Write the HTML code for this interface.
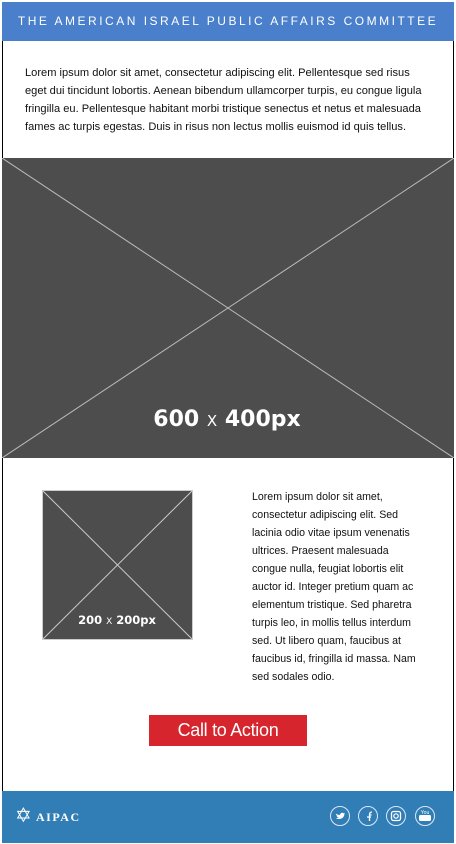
<!DOCTYPE html>
<html><head><style>
*{margin:0;padding:0;box-sizing:border-box}
body{width:456px;height:844px;background:#fff;font-family:"Liberation Sans",Arial,sans-serif;position:relative;overflow:hidden}
.abs{position:absolute}
</style></head><body>
<div class="abs" style="left:2px;top:2px;width:452px;height:840px;border-left:1px solid #000;border-right:1px solid #000"></div>
<div class="abs" style="left:2px;top:2px;width:452px;height:39px;background:#4a7fcb;color:#fff;font-size:12px;letter-spacing:2.5px;text-align:center;line-height:39px;white-space:nowrap">THE AMERICAN ISRAEL PUBLIC AFFAIRS COMMITTEE</div>
<div class="abs" style="left:25px;top:64px;width:408px;font-size:11.1px;line-height:18px;color:#111">Lorem ipsum dolor sit amet, consectetur adipiscing elit. Pellentesque sed risus eget dui tincidunt lobortis. Aenean bibendum ullamcorper turpis, eu congue ligula fringilla eu. Pellentesque habitant morbi tristique senectus et netus et malesuada fames ac turpis egestas. Duis in risus non lectus mollis euismod id quis tellus.</div>
<svg class="abs" style="left:2px;top:158px" width="452" height="300"><rect width="452" height="300" fill="#4d4d4d"/><line x1="0" y1="0" x2="452" y2="300" stroke="#bbb" stroke-width="1"/><line x1="452" y1="0" x2="0" y2="300" stroke="#bbb" stroke-width="1"/><text x="225" y="268" fill="#fff" font-family="DejaVu Sans,sans-serif" font-weight="bold" font-size="22" text-anchor="middle">600 <tspan font-weight="normal" font-size="15">X</tspan> 400px</text></svg>
<svg class="abs" style="left:42px;top:490px" width="151" height="150"><rect x=".5" y=".5" width="150" height="149" fill="#4d4d4d" stroke="#ccc"/><line x1="0" y1="0" x2="151" y2="150" stroke="#ccc"/><line x1="151" y1="0" x2="0" y2="150" stroke="#ccc"/><text x="75" y="134" fill="#fff" font-family="DejaVu Sans,sans-serif" font-weight="bold" font-size="11.5" text-anchor="middle">200 <tspan font-weight="normal" font-size="9">X</tspan> 200px</text></svg>
<div class="abs" style="left:252px;top:488px;width:166px;font-size:10.6px;line-height:18px;color:#111">Lorem ipsum dolor sit amet, consectetur adipiscing elit. Sed lacinia odio vitae ipsum venenatis ultrices. Praesent malesuada congue nulla, feugiat lobortis elit auctor id. Integer pretium quam ac elementum tristique. Sed pharetra turpis leo, in mollis tellus interdum sed. Ut libero quam, faucibus at faucibus id, fringilla id massa. Nam sed sodales odio.</div>
<div class="abs" style="left:149px;top:715px;width:158px;height:31px;background:#d6252c;color:#fff;font-size:18px;text-align:center;line-height:31px;letter-spacing:-0.3px">Call to Action</div>
<div class="abs" style="left:2px;top:791px;width:452px;height:52px;background:#317db5"></div>
<div class="abs" style="left:15px;top:805px;color:#fff;font-size:20px;line-height:22px">✡</div>
<div class="abs" style="left:36px;top:810px;color:#fff;font-family:'Liberation Serif',serif;font-size:12px;letter-spacing:1.5px;font-weight:bold">AIPAC</div>
<svg class="abs" style="left:328px;top:804px" width="110" height="24" fill="none" stroke="#dce9f5" stroke-width="1">
<circle cx="12" cy="12" r="9.5"/><circle cx="40" cy="12" r="9.5"/><circle cx="68" cy="12" r="9.5"/><circle cx="97" cy="12" r="9.5"/>
<path d="M7.5 9.5c1.5 1 3 1.5 4.5 1.5 0-2 2.5-3 3.8-1.5l1.2-.5-.6 1c0 3-2.5 5-5.5 5-1 0-2-.3-3-.8 1.2 0 2-.3 2.7-.9-1 0-1.8-.6-2-1.4h1c-1-.3-1.7-1.1-1.7-2z" fill="#fff" stroke="none"/>
<path d="M41.5 17v-6h2M39 13h4M41.5 11c0-2 .7-3 2.5-3" stroke="#fff" stroke-width="1.3"/>
<rect x="63.5" y="7.5" width="9" height="9" rx="2" stroke="#fff" stroke-width="1.3"/><circle cx="68" cy="12" r="2.2" stroke="#fff" stroke-width="1.2"/>
<rect x="91" y="11" width="12" height="6" rx="1.5" fill="#fff" stroke="none"/><text x="97" y="10" fill="#fff" stroke="none" font-size="5" text-anchor="middle" font-family="Liberation Sans">You</text>
</svg>
</body></html>
